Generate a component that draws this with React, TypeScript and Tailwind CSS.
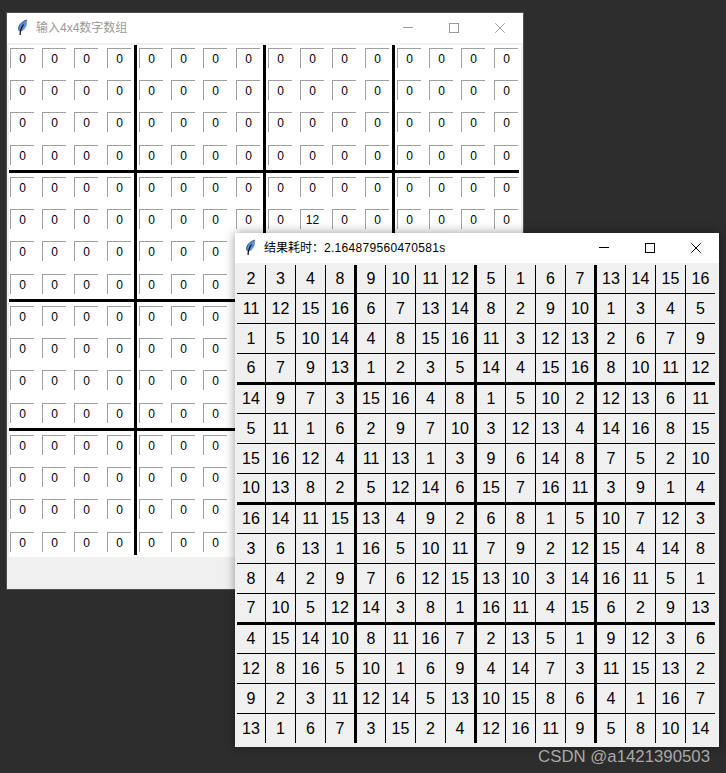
const results = [
  [2, 3, 4, 8, 9, 10, 11, 12, 5, 1, 6, 7, 13, 14, 15, 16],
  [11, 12, 15, 16, 6, 7, 13, 14, 8, 2, 9, 10, 1, 3, 4, 5],
  [1, 5, 10, 14, 4, 8, 15, 16, 11, 3, 12, 13, 2, 6, 7, 9],
  [6, 7, 9, 13, 1, 2, 3, 5, 14, 4, 15, 16, 8, 10, 11, 12],
  [14, 9, 7, 3, 15, 16, 4, 8, 1, 5, 10, 2, 12, 13, 6, 11],
  [5, 11, 1, 6, 2, 9, 7, 10, 3, 12, 13, 4, 14, 16, 8, 15],
  [15, 16, 12, 4, 11, 13, 1, 3, 9, 6, 14, 8, 7, 5, 2, 10],
  [10, 13, 8, 2, 5, 12, 14, 6, 15, 7, 16, 11, 3, 9, 1, 4],
  [16, 14, 11, 15, 13, 4, 9, 2, 6, 8, 1, 5, 10, 7, 12, 3],
  [3, 6, 13, 1, 16, 5, 10, 11, 7, 9, 2, 12, 15, 4, 14, 8],
  [8, 4, 2, 9, 7, 6, 12, 15, 13, 10, 3, 14, 16, 11, 5, 1],
  [7, 10, 5, 12, 14, 3, 8, 1, 16, 11, 4, 15, 6, 2, 9, 13],
  [4, 15, 14, 10, 8, 11, 16, 7, 2, 13, 5, 1, 9, 12, 3, 6],
  [12, 8, 16, 5, 10, 1, 6, 9, 4, 14, 7, 3, 11, 15, 13, 2],
  [9, 2, 3, 11, 12, 14, 5, 13, 10, 15, 8, 6, 4, 1, 16, 7],
  [13, 1, 6, 7, 3, 15, 2, 4, 12, 16, 11, 9, 5, 8, 10, 14],
];

const indexes = Array.from({ length: 16 }, (_, i) => i);

function Feather() {
  return (
    <svg width="16" height="16" viewBox="0 0 16 16" className="-mt-[2px] shrink-0">
      <path d="M12 1C9 1.5 5 4 3.7 8C3.2 10 3.8 11.5 4.5 12.5C7 12.5 10 10.5 11 8C12 5.5 12.3 3 12 1Z" fill="#5a8ed2" />
      <path d="M11.5 2C11.8 4.5 11 7 9.5 9L7.5 11.5C9.3 11 10.4 9.5 11 8C11.8 5.8 12.2 3.5 12 1Z" fill="#a8c8ee" />
      <path d="M12 1C9 1.5 5 4 3.7 8C3.3 9.6 3.6 10.8 4.1 11.8" stroke="#26364a" strokeWidth="0.7" fill="none" />
      <path d="M5.2 16C4.9 13 5.6 10 8.5 5.5" stroke="#0c0c0c" strokeWidth="1.2" fill="none" />
    </svg>
  );
}

function WindowButtons({ color }: { color: string }) {
  return (
    <div className="flex h-full shrink-0" style={{ color }}>
      <div className="flex w-[46px] items-center justify-center">
        <svg width="10" height="10" viewBox="0 0 10 10" shapeRendering="crispEdges">
          <path d="M0 4.5H10" stroke="currentColor" />
        </svg>
      </div>
      <div className="flex w-[46px] items-center justify-center">
        <svg width="10" height="10" viewBox="0 0 10 10" shapeRendering="crispEdges">
          <rect x="0.5" y="0.5" width="9" height="9" fill="none" stroke="currentColor" />
        </svg>
      </div>
      <div className="flex w-[46px] items-center justify-center">
        <svg width="10" height="10" viewBox="0 0 10 10">
          <path d="M0.3 0.3L9.7 9.7M9.7 0.3L0.3 9.7" stroke="currentColor" strokeWidth="1" />
        </svg>
      </div>
    </div>
  );
}

function InputWindow() {
  return (
    <div className="absolute left-[7px] top-[13px] flex h-[576px] w-[516px] flex-col bg-[#f0f0f0] shadow-[0_0_0_1px_#505050]">
      <div className="flex h-[30px] shrink-0 items-center justify-between bg-white">
        <div className="flex items-center gap-[5px] pl-[8px] text-[12px] text-[#9a9a9a]">
          <Feather />
          <span>输入4x4数字数组</span>
        </div>
        <WindowButtons color="#9a9a9a" />
      </div>
      <div className="pl-[2px] pt-[2px]">
        <div className="h-[512px] w-[512px] bg-white">
          <div className="grid grid-cols-[33px_32px_33px_30px_34px_32px_33px_30px_34px_32px_33px_30px_34px_32px_33px_25px] grid-rows-[35px_32px_33px_28px_36px_32px_33px_28px_36px_32px_33px_28px_36px_32px_33px_23px] w-[510px]">
            {indexes.map((r) =>
              indexes.map((c) => (
                <div
                  key={`${r}-${c}`}
                  className={`${c === 0 ? "pl-[1px]" : c % 4 === 0 ? "pl-[2px]" : ""} ${
                    r === 0 ? "pt-[3px]" : r % 4 === 0 ? "pt-[4px]" : ""
                  } ${c % 4 === 3 && c !== 15 ? "border-r-[3px] border-black" : ""} ${
                    r % 4 === 3 && r !== 15 ? "border-b-[3px] border-black" : ""
                  }`}
                >
                  <div className="h-5 w-6 border-l border-t border-[#a0a0a0] text-center text-[12px] leading-[21px] text-black">
                    {r === 5 && c === 9 ? "12" : "0"}
                  </div>
                </div>
              ))
            )}
          </div>
        </div>
      </div>
    </div>
  );
}

function ResultWindow() {
  return (
    <div className="absolute left-[235px] top-[233px] flex h-[514px] w-[484px] flex-col bg-[#f0f0f0] shadow-[0_0_10px_rgba(0,0,0,0.4)]">
      <div className="flex h-[30px] shrink-0 items-center justify-between bg-white">
        <div className="flex items-center gap-[5px] pl-[8px] text-[12px] text-black">
          <Feather />
          <span>
            结果耗时：<span className="tracking-[0.3px]">2.164879560470581s</span>
          </span>
        </div>
        <WindowButtons color="#000000" />
      </div>
      <div className="pl-[2px] pt-[2px]">
        <div className="grid w-[478px] grid-cols-[29px_30px_30px_31px_29px_30px_30px_31px_29px_30px_30px_31px_29px_30px_30px_29px] grid-rows-[29px_30px_30px_31px_29px_30px_30px_31px_29px_30px_30px_31px_29px_30px_30px_29px]">
          {results.map((row, r) =>
            row.map((value, c) => (
              <div
                key={`${r}-${c}`}
                className={`flex items-center justify-center border-black text-[16px] text-black ${
                  c === 15 ? "" : c % 4 === 3 ? "border-r-[3px]" : "border-r"
                } ${r === 15 ? "" : r % 4 === 3 ? "border-b-[3px]" : "border-b"}`}
              >
                {value}
              </div>
            ))
          )}
        </div>
      </div>
    </div>
  );
}

export default function App() {
  return (
    <div className="relative h-[773px] w-[726px] overflow-hidden bg-[#2d2d2d] font-['Liberation_Sans','Noto_Sans_CJK_SC',sans-serif]">
      <InputWindow />
      <ResultWindow />
      <div className="absolute right-[16px] top-[747px] text-[16.8px] leading-[20px] text-[#a8a8a8]">
        CSDN @a1421390503
      </div>
    </div>
  );
}
